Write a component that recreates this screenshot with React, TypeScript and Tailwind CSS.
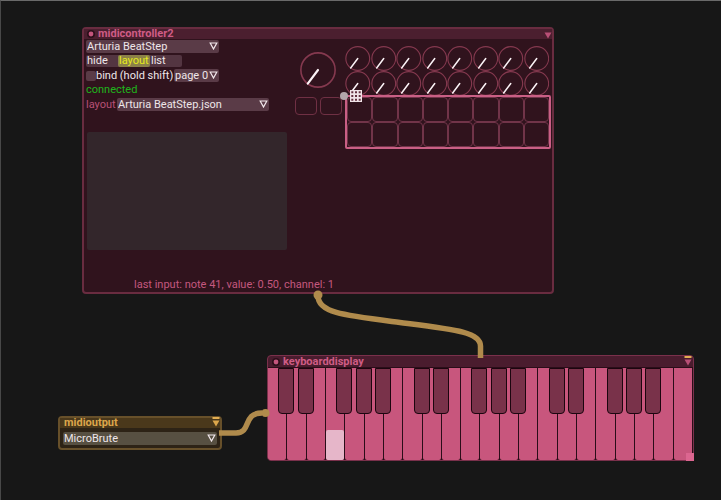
import React, { useState } from 'react';
import { clsx } from 'clsx';

const OCTAVE_HAS_SHARP = [true, true, false, true, true, true, false];
const WHITE_KEYS = Array.from({ length: 22 }, (_, i) => i);
const COLUMNS = Array.from({ length: 8 }, (_, i) => i);

interface DropdownProps {
  label: string;
  options: string[];
  className?: string;
  id?: string;
}

function Dropdown({ label, options, className, id }: DropdownProps) {
  return (
    <div className={clsx('relative rounded-xs', className)}>
      <select
        id={id}
        aria-label={id ? undefined : label}
        className="block size-full appearance-none bg-transparent pl-px leading-3 text-[#eee6e9] outline-none"
      >
        {options.map((option) => (
          <option key={option}>{option}</option>
        ))}
      </select>
      <svg viewBox="0 0 9 8" className="pointer-events-none absolute top-0.5 right-px h-2 w-[9px]">
        <path d="M1.2 1H7.8L4.5 7Z" fill="none" stroke="#f3e9ed" strokeWidth="1.2" />
      </svg>
    </div>
  );
}

function CollapseButton({ className, marked }: { className: string; marked?: boolean }) {
  return (
    <button type="button" aria-label="Collapse" className={clsx('ml-auto', className)}>
      <svg viewBox="0 0 8 10" className="h-2.5 w-2">
        {marked && <path d="M0.5 0H7.5V2H0.5Z" fill="#e3ae52" />}
        <path d="M0.5 3.5H7.5L4 9.5Z" fill="currentColor" />
      </svg>
    </button>
  );
}

function EnabledDot() {
  return (
    <svg viewBox="0 0 8 8" className="mr-[3px] size-2">
      <circle cx="4" cy="4" r="4" fill="#2c0f1a" />
      <circle cx="4" cy="4" r="2.4" fill="#c4557d" />
    </svg>
  );
}

function Knob({ className }: { className: string }) {
  return (
    <svg viewBox="0 0 25 25" className={className}>
      <circle cx="12.5" cy="12.5" r="11.9" fill="none" stroke="#85394f" strokeWidth="1.1" />
      <path d="M12.5 12.5L5.4 22" stroke="#fbf3f6" strokeWidth="1.5" strokeLinecap="round" />
    </svg>
  );
}

function ControllerPreview() {
  return (
    <div className="flex gap-0.5">
      <div className="flex w-12 flex-col pt-3">
        <Knob className="ml-[5px] size-9" />
        <div className="mt-[9px] flex gap-[3px]">
          <button type="button" aria-label="Button 1" className="h-[18px] w-[22px] rounded-sm border border-[#6f3044]" />
          <button type="button" aria-label="Button 2" className="h-[18px] w-[22px] rounded-sm border border-[#6f3044]" />
        </div>
      </div>
      <div className="w-[206px] pt-1.5">
        <div className="grid h-[49px] grid-cols-8 overflow-hidden pr-0.5">
          {COLUMNS.map((i) => (
            <Knob key={i} className="h-[25px] w-full" />
          ))}
          {COLUMNS.map((i) => (
            <Knob key={i + 8} className="h-[25px] w-full" />
          ))}
        </div>
        {/* Selected pad grid */}
        <div className="relative rounded-xs border-2 border-[#c95f85]">
          <div className="grid grid-cols-8">
            {[...COLUMNS, ...COLUMNS].map((_, i) => (
              <button key={i} type="button" aria-label={`Pad ${i + 1}`} className="h-[25px] rounded-sm border border-[#713449]" />
            ))}
          </div>
          <svg viewBox="0 0 22 12" className="absolute -top-[7px] -left-[7px] h-3 w-[22px]">
            <circle cx="4" cy="6" r="4" fill="#b3a5aa" />
            <path d="M10 0H22V12H10Z" fill="#f0e3e8" />
            <path
              d="M11.3 1.3h2v2h-2zM15 1.3h2v2h-2zM18.7 1.3h2v2h-2zM11.3 5h2v2h-2zM15 5h2v2h-2zM18.7 5h2v2h-2zM11.3 8.7h2v2h-2zM15 8.7h2v2h-2zM18.7 8.7h2v2h-2z"
              fill="#62303f"
            />
          </svg>
        </div>
      </div>
    </div>
  );
}

function MidiController() {
  const [view, setView] = useState('layout');

  return (
    <section className="absolute top-[27px] left-[82px] rounded-sm border-2 border-[#692c40] bg-[#30131d]">
      <header className="flex h-2.5 items-center bg-[#4b1f2f] pl-[3px] text-[#cf5c85]">
        <EnabledDot />
        <h2 className="font-bold leading-[10px]">midicontroller2</h2>
        <CollapseButton className="text-[#b84f76]" />
      </header>
      <div className="flex gap-2 pt-px pr-px pl-0.5">
        <div className="flex w-[201px] flex-col gap-0.5">
          <Dropdown label="Controller" options={['Arturia BeatStep']} className="h-[13px] w-[133px] bg-[#5a3b47]" />
          <fieldset className="flex h-3 w-24 rounded-xs bg-[#533541]">
            {['hide', 'layout', 'list'].map((name) => (
              <label
                key={name}
                className={clsx(
                  'relative flex-1 rounded-xs pl-px leading-3',
                  view === name ? 'bg-[#8c8148] text-[#e6ea1c]' : 'text-[#eee6e9]',
                )}
              >
                <input
                  type="radio"
                  name="view"
                  className="sr-only"
                  checked={view === name}
                  onChange={() => setView(name)}
                />
                {name}
              </label>
            ))}
          </fieldset>
          <div className="flex h-[13px] w-[133px] items-center justify-between">
            <label className="flex items-center leading-3 whitespace-nowrap text-[#eee6e9]">
              <input type="checkbox" className="size-2.5 appearance-none rounded-xs bg-[#5a3b47] checked:bg-[#cf5c85]" />
              bind (hold shift)
            </label>
            <Dropdown label="Page" options={['page 0', 'page 1', 'page 2']} className="h-[13px] w-[45px] bg-[#5a3b47]" />
          </div>
          <p className="h-3 leading-3 text-[#1fb41c]">connected</p>
          <div className="flex items-center justify-between self-start">
            <label htmlFor="layout-file" className="w-[31px] leading-3 text-[#b85075]">
              layout
            </label>
            <Dropdown id="layout-file" label="Layout file" options={['Arturia BeatStep.json']} className="h-[13px] w-[152px] bg-[#5a3b47]" />
          </div>
          <div className="mt-[19px] ml-px h-[118px] rounded-xs bg-[#33262b]" />
        </div>
        <ControllerPreview />
      </div>
      <p className="mt-[29px] pb-px pl-[50px] leading-3 text-[#c4587f]">last input: note 41, value: 0.50, channel: 1</p>
    </section>
  );
}

function KeyboardDisplay() {
  const pressed = 3;

  return (
    <section className="absolute top-[355px] left-[267px] w-[427px] rounded-sm border border-[#7a304b] bg-[#4a1c2e]">
      <header className="flex h-[11px] items-center pl-1 text-[#cf5c85]">
        <EnabledDot />
        <h2 className="font-bold leading-[11px]">keyboarddisplay</h2>
        <CollapseButton className="mr-px -mt-0.5 text-[#b84f76]" marked />
      </header>
      <div className="relative flex h-[93px] border-t border-[#2b0d19] bg-[#2b0d19]">
        {WHITE_KEYS.map((i) => (
          <div key={i} className="relative flex flex-1">
            <button
              type="button"
              aria-label={`White key ${i + 1}`}
              className="mr-px flex flex-1 items-end rounded-b-xs bg-[#c8567d]"
            >
              {i === pressed && <span className="h-[30px] w-full rounded-xs bg-[#e6b6c9]" />}
            </button>
            {OCTAVE_HAS_SHARP[i % 7] && i < 21 && (
              <button
                type="button"
                aria-label={`Black key ${i + 1}`}
                className="absolute top-0 -right-[7px] z-10 h-[46px] w-4 rounded-b-sm border border-[#1c060f] bg-[#79324a]"
              />
            )}
          </div>
        ))}
        <span className="absolute -right-px -bottom-px size-2 bg-[#dc6690]" />
      </div>
    </section>
  );
}

function MidiOutput() {
  return (
    <section className="absolute top-[416px] left-[58px] w-[164px] rounded-sm border-2 border-[#67502a] bg-[#2d2316]">
      <header className="flex h-2.5 items-center bg-[#4a381b] pl-1 text-[#dca64b]">
        <h2 className="font-bold leading-[10px]">midioutput</h2>
        <CollapseButton className="-mt-0.5" marked />
      </header>
      <div className="px-[3px] pt-1 pb-[3px]">
        <Dropdown label="Output device" options={['MicroBrute']} className="h-[13px] bg-[#575042]" />
      </div>
    </section>
  );
}

function Cables() {
  return (
    <svg className="pointer-events-none absolute inset-0 size-full" fill="none" stroke="#b08b4c" strokeWidth="5.5">
      <path d="M318 296C318 313 345 315.5 400 322.5S480.5 332 480.5 346V358" />
      <circle cx="318" cy="295" r="4.5" fill="#b08b4c" stroke="none" />
      <path d="M219 433H236C252 433 242 413 262 413" />
      <circle cx="265.5" cy="413" r="4" fill="#b08b4c" stroke="none" />
    </svg>
  );
}

export default function App() {
  return (
    <main className="relative min-h-screen overflow-hidden border-t border-l border-t-[#6a6a6a] border-l-[#484848] bg-[#171717] font-[Roboto,'Liberation_Sans',sans-serif] text-[11px]">
      <div className="absolute -top-px right-0 bottom-0 -left-px">
        <MidiController />
        <KeyboardDisplay />
        <MidiOutput />
        <Cables />
      </div>
    </main>
  );
}
